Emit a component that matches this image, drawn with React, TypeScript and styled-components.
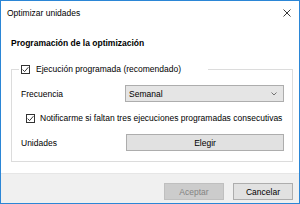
import styled, { createGlobalStyle } from "styled-components";

const GlobalStyle = createGlobalStyle`
  html, body {
    margin: 0;
    padding: 0;
    background: #ffffff;
  }
  body {
    font-family: "Liberation Sans", Arial, sans-serif;
    font-size: 8.5px;
    color: #000000;
  }
`;

interface CheckProps {
  checked: boolean;
}

function CheckBox({ checked }: CheckProps): JSX.Element {
  return (
    <CheckSquare>
      {checked && (
        <svg width="7" height="7" viewBox="0 0 7 7">
          <path d="M0.6 3.6 L2.6 5.6 L6.4 1.2" fill="none" stroke="#222" strokeWidth="0.9" />
        </svg>
      )}
    </CheckSquare>
  );
}

function App(): JSX.Element {
  return (
    <>
      <GlobalStyle />
      <Window>
        <TitleBar>
          <Title>Optimizar unidades</Title>
          <CloseButton>
            <svg width="8" height="8" viewBox="0 0 8 8">
              <path d="M0.5 0.5 L7.5 7.5 M7.5 0.5 L0.5 7.5" stroke="#222" strokeWidth="0.9" />
            </svg>
          </CloseButton>
        </TitleBar>
        <Body>
          <Heading>Programación de la optimización</Heading>
          <Group>
            <Legend>
              <CheckBox checked />
              <LegendText>Ejecución programada (recomendado)</LegendText>
            </Legend>
            <Row>
              <Label>Frecuencia</Label>
              <Select>
                <span>Semanal</span>
                <svg width="6" height="4" viewBox="0 0 6 4">
                  <path d="M0.5 0.5 L3 3 L5.5 0.5" fill="none" stroke="#555" strokeWidth="0.8" />
                </svg>
              </Select>
            </Row>
            <CheckRow>
              <CheckBox checked />
              <span>Notificarme si faltan tres ejecuciones programadas consecutivas</span>
            </CheckRow>
            <Row $gap={11}>
              <Label>Unidades</Label>
              <Button $wide>Elegir</Button>
            </Row>
          </Group>
        </Body>
        <Footer>
          <Button $disabled>Aceptar</Button>
          <Button>Cancelar</Button>
        </Footer>
      </Window>
    </>
  );
}

const Window = styled.div`
  box-sizing: border-box;
  width: 300px;
  height: 204px;
  border: 1px solid #2b86d6;
  display: flex;
  flex-direction: column;
  background: #ffffff;
`;

const TitleBar = styled.div`
  height: 23px;
  display: flex;
  align-items: center;
  justify-content: space-between;
  padding: 0 6px 0 6px;
`;

const Title = styled.div`
  font-size: 8.5px;
  color: #000000;
`;

const CloseButton = styled.div`
  width: 8px;
  height: 8px;
  display: flex;
  margin-right: 2px;
`;

const Body = styled.div`
  flex: 1;
  padding: 13px 6px 0 10px;
`;

const Heading = styled.div`
  font-weight: bold;
  font-size: 8.5px;
  height: 12px;
  line-height: 12px;
  margin-bottom: 15px;
`;

const Group = styled.fieldset`
  margin: 0;
  padding: 11px 8px 10px 9px;
  border: 1px solid #dcdcdc;
  min-width: 0;
`;

const Legend = styled.legend`
  display: flex;
  align-items: center;
  gap: 6px;
  height: 10px;
  padding: 0 27px 0 2px;
  margin-left: -2px;
`;

const LegendText = styled.span`
  line-height: 10px;
`;

const CheckSquare = styled.span`
  box-sizing: border-box;
  width: 9px;
  height: 9px;
  border: 1px solid #333333;
  background: #ffffff;
  display: inline-flex;
  align-items: center;
  justify-content: center;
  flex-shrink: 0;
`;

const Row = styled.div<{ $gap?: number }>`
  display: grid;
  grid-template-columns: 104px 1fr;
  align-items: center;
  height: 17px;
  margin-top: ${(p) => (p.$gap ? `${p.$gap}px` : "0")};
`;

const Label = styled.span`
  line-height: 10px;
`;

const Select = styled.div`
  box-sizing: border-box;
  height: 17px;
  background: #e5e5e5;
  border: 1px solid #adadad;
  display: flex;
  align-items: center;
  justify-content: space-between;
  padding: 0 6px 0 3px;
`;

const CheckRow = styled.div`
  display: flex;
  align-items: center;
  gap: 5px;
  height: 10px;
  margin-top: 11px;
  padding-left: 5px;
`;

const Button = styled.div<{ $disabled?: boolean; $wide?: boolean }>`
  box-sizing: border-box;
  height: 17px;
  width: ${(p) => (p.$wide ? "auto" : "60px")};
  margin-left: ${(p) => (p.$wide ? "1px" : "0")};
  background: ${(p) => (p.$disabled ? "#cccccc" : "#e1e1e1")};
  border: 1px solid ${(p) => (p.$disabled ? "#bfbfbf" : "#adadad")};
  color: ${(p) => (p.$disabled ? "#838383" : "#000000")};
  display: flex;
  align-items: center;
  justify-content: center;
`;

const Footer = styled.div`
  height: 30px;
  box-sizing: border-box;
  background: #f0f0f0;
  border-top: 1px solid #e6e6e6;
  display: flex;
  justify-content: flex-end;
  align-items: flex-start;
  gap: 9px;
  padding: 9px 6px 0 0;
`;

export default App;
